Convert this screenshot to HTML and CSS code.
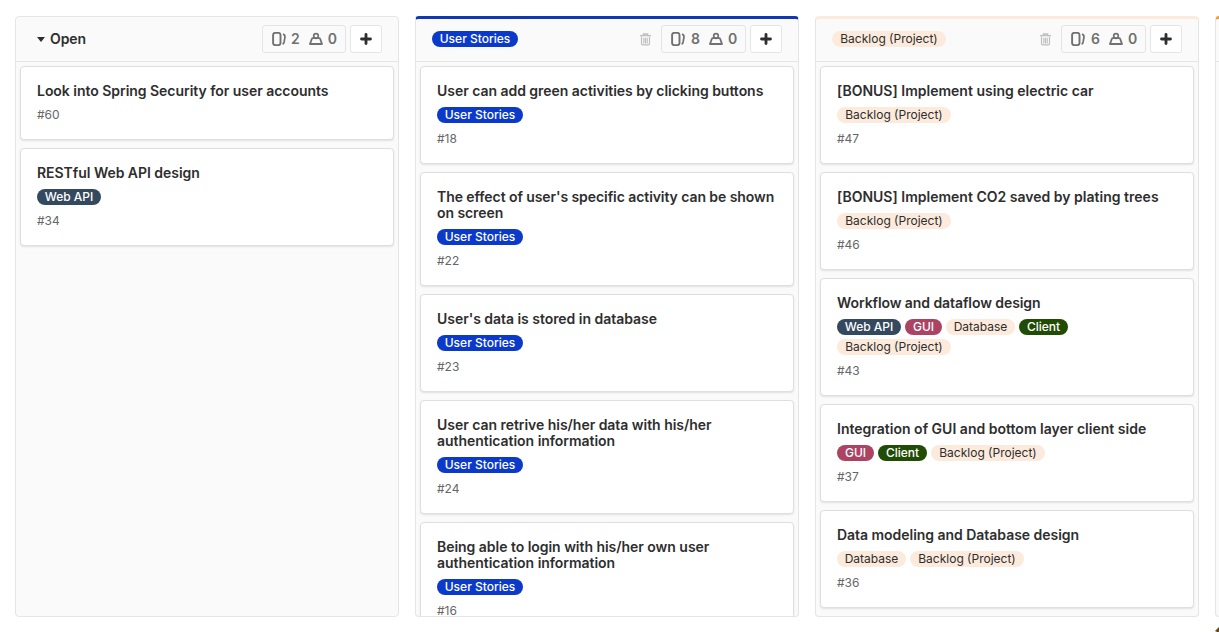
FILE: index.html
```
<!DOCTYPE html>
<html lang="en">
<head>
<meta charset="utf-8">
<title>Issue Board</title>
<link rel="stylesheet" href="styles.css">
</head>
<body>
<svg class="sprite" aria-hidden="true">
  <symbol id="issues" viewBox="0 0 14 14"><rect x="1.1" y="0.9" width="7.4" height="12.2" rx="2" fill="none" stroke="currentColor" stroke-width="1.9"/><path d="M11 2.1Q13.3 2.9 13 4.9L12.2 9.7Q11.8 11.6 10.6 12.1" fill="none" stroke="currentColor" stroke-width="1.7"/></symbol>
  <symbol id="weight" viewBox="0 0 14 14"><path d="M4 6.2H10Q10.9 6.2 11.2 7L13 12H1L2.8 7Q3.1 6.2 4 6.2Z" fill="none" stroke="currentColor" stroke-width="1.8" stroke-linejoin="round"/><circle cx="7" cy="4" r="2.3" fill="none" stroke="currentColor" stroke-width="1.7"/></symbol>
  <symbol id="plus" viewBox="0 0 11 11"><path d="M5.5 1.4V9.6M1.4 5.5H9.6" fill="none" stroke="currentColor" stroke-width="2.6" stroke-linecap="round"/></symbol>
  <symbol id="trash" viewBox="0 0 11 13"><path d="M0 2.6H11M3.4 2.4V1H7.6V2.4" fill="none" stroke="currentColor" stroke-width="1.4"/><path d="M1.5 3.4V10.6Q1.5 11.9 2.8 11.9H8.2Q9.5 11.9 9.5 10.6V3.4M3.8 4.8V10.4M5.5 4.8V10.4M7.2 4.8V10.4" fill="none" stroke="currentColor" stroke-width="1.15"/></symbol>
</svg>
<main class="board">
  <section class="list">
    <header class="head">
      <h2 class="name"><span class="caret"></span>Open</h2>
      <div class="counts"><svg class="icon"><use href="#issues"/></svg><span>2</span><svg class="icon second"><use href="#weight"/></svg><span>0</span></div>
      <button class="add"><svg class="plus"><use href="#plus"/></svg></button>
    </header>
    <div class="cards">
      <article class="card"><h3>Look into Spring Security for user accounts</h3><div class="number">#60</div></article>
      <article class="card"><h3>RESTful Web API design</h3><div class="labels"><span class="label api">Web API</span></div><div class="number">#34</div></article>
    </div>
  </section>
  <section class="list blue">
    <header class="head">
      <h2 class="name"><span class="label stories">User Stories</span></h2>
      <svg class="trash"><use href="#trash"/></svg>
      <div class="counts"><svg class="icon"><use href="#issues"/></svg><span>8</span><svg class="icon second"><use href="#weight"/></svg><span>0</span></div>
      <button class="add"><svg class="plus"><use href="#plus"/></svg></button>
    </header>
    <div class="cards">
      <article class="card"><h3>User can add green activities by clicking buttons</h3><div class="labels"><span class="label stories">User Stories</span></div><div class="number">#18</div></article>
      <article class="card"><h3 class="snug">The effect of user's specific activity can be shown<br>on screen</h3><div class="labels"><span class="label stories">User Stories</span></div><div class="number">#22</div></article>
      <article class="card"><h3>User's data is stored in database</h3><div class="labels"><span class="label stories">User Stories</span></div><div class="number">#23</div></article>
      <article class="card"><h3>User can retrive his/her data with his/her<br>authentication information</h3><div class="labels"><span class="label stories">User Stories</span></div><div class="number">#24</div></article>
      <article class="card"><h3>Being able to login with his/her own user<br>authentication information</h3><div class="labels"><span class="label stories">User Stories</span></div><div class="number">#16</div></article>
    </div>
  </section>
  <section class="list peach">
    <header class="head">
      <h2 class="name"><span class="label backlog">Backlog (Project)</span></h2>
      <svg class="trash"><use href="#trash"/></svg>
      <div class="counts"><svg class="icon"><use href="#issues"/></svg><span>6</span><svg class="icon second"><use href="#weight"/></svg><span>0</span></div>
      <button class="add"><svg class="plus"><use href="#plus"/></svg></button>
    </header>
    <div class="cards">
      <article class="card"><h3 class="wide">[BONUS] Implement using electric car</h3><div class="labels"><span class="label backlog">Backlog (Project)</span></div><div class="number">#47</div></article>
      <article class="card"><h3 class="wide">[BONUS] Implement CO2 saved by plating trees</h3><div class="labels"><span class="label backlog">Backlog (Project)</span></div><div class="number">#46</div></article>
      <article class="card"><h3 class="snug">Workflow and dataflow design</h3><div class="labels"><span class="label api">Web API</span><span class="label gui">GUI</span><span class="label database">Database</span><span class="label client">Client</span><span class="label backlog">Backlog (Project)</span></div><div class="number">#43</div></article>
      <article class="card"><h3 class="wide">Integration of GUI and bottom layer client side</h3><div class="labels"><span class="label gui">GUI</span><span class="label client">Client</span><span class="label backlog">Backlog (Project)</span></div><div class="number">#37</div></article>
      <article class="card"><h3>Data modeling and Database design</h3><div class="labels"><span class="label database">Database</span><span class="label backlog">Backlog (Project)</span></div><div class="number">#36</div></article>
    </div>
  </section>
  <section class="list orange"><header class="head"></header></section>
</main>
<svg class="corner" viewBox="0 0 4 5"><path d="M4 0L0 4L2 5H4Z" fill="#65491c"/></svg>
</body>
</html>
```
FILE: styles.css
```
* { box-sizing: border-box; }
body { margin: 0; height: 632px; overflow: hidden; background: #fff; color: #2e2e2e; font-family: Inter, sans-serif; }
.sprite { display: none; }
.board { display: flex; gap: 16px; width: 1219px; padding: 16px 0 0 15px; overflow: hidden; }
.list { flex: 0 0 384px; height: 601px; display: flex; flex-direction: column; background: #fafafa; border: 1px solid #e5e5e5; border-radius: 4px; overflow: hidden; }
.head { flex: 0 0 45px; display: flex; align-items: center; padding: 0 16px; border-bottom: 1px solid #e5e5e5; }
.blue, .peach, .orange { border-top-width: 3px; }
.blue { border-top-color: #1038b2; }
.peach { border-top-color: #fcebdc; }
.orange { border-top-color: #eba13d; }
.blue .head, .peach .head, .orange .head { flex-basis: 43px; padding-bottom: 2px; }
.name { margin: 0; flex: 1; display: flex; align-items: center; font-size: 14px; line-height: 16px; font-weight: 600; letter-spacing: -0.1px; }
.caret { width: 8px; margin: 0 5px; border: 4px solid transparent; border-top: 5px solid #2e2e2e; border-bottom: 0; }
.counts { width: 84px; height: 28px; display: flex; align-items: center; padding: 0 0 0 9px; border: 1px solid #e5e5e5; border-radius: 3px; color: #707070; font-size: 14px; font-weight: 600; line-height: 16px; }
.blue .counts, .peach .counts { width: 85px; }
.icon { width: 14px; height: 14px; margin-right: 5px; }
.blue .icon:first-child, .peach .icon:first-child { margin-right: 6px; }
.second { margin-left: 9px; }
.trash { width: 11px; height: 13px; margin-right: 10px; color: #bfbfbf; }
.add { width: 32px; height: 28px; margin-left: 4px; padding: 0; display: grid; place-items: center; border: 1px solid #e5e5e5; border-radius: 3px; background: #fff; color: #2e2e2e; }
.plus { width: 12px; height: 12px; }
.cards { flex: 1; min-height: 0; display: flex; flex-direction: column; gap: 8px; padding: 4px; overflow: hidden; }
.card { flex: none; display: flex; flex-direction: column; gap: 8px; padding: 16px; border: 1px solid #dfdfdf; border-radius: 4px; background: #fff; box-shadow: 0 1px 2px rgba(0, 0, 0, 0.1); }
.card h3 { margin: 0; font-size: 14px; line-height: 16px; font-weight: 600; letter-spacing: -0.035px; white-space: nowrap; }
.card h3.snug { letter-spacing: -0.075px; }
.card h3.wide { letter-spacing: 0.01px; }
.labels { display: flex; flex-wrap: wrap; gap: 4px; padding-right: 60px; }
.label { height: 16px; display: flex; align-items: center; justify-content: center; border-radius: 8px; color: #fff; font-size: 12px; line-height: 16px; font-weight: 500; letter-spacing: 0; white-space: nowrap; }
.stories { width: 86px; background: #0b3acb; }
.api { width: 64px; background: #34495e; }
.gui { width: 37px; background: #ad4363; }
.client { width: 49px; background: #214c05; }
.database { width: 69px; background: #fcebdc; color: #2e2e2e; font-weight: 400; }
.backlog { width: 114px; background: #fcebdc; color: #2e2e2e; font-weight: 400; }
.number { height: 16px; font-size: 12px; line-height: 16px; color: #666; }
.corner { position: absolute; right: 0; bottom: 0; width: 4px; height: 5px; }
```
